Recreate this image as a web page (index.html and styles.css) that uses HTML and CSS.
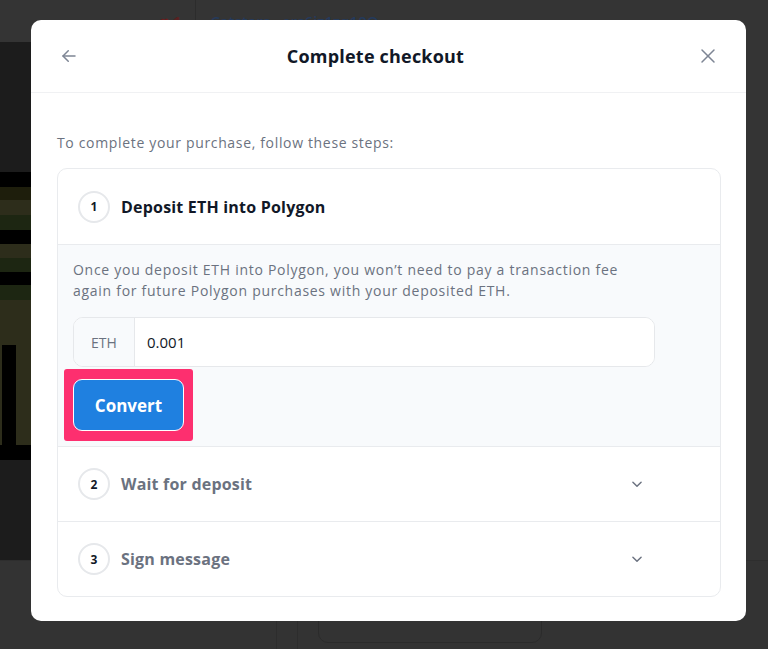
FILE: index.html
```html
<!DOCTYPE html>
<html lang="en">
<head>
    <meta charset="UTF-8">
    <meta name="viewport" content="width=device-width, initial-scale=1.0">
    <title>Complete checkout</title>
    <link rel="stylesheet" href="styles.css">
</head>
<body>
    <div class="page">
        <header class="topbar">
            <span class="likes"><span class="heart">&#9829;</span> 1</span>
            <span class="sep"></span>
            <a class="owner" href="#">Catstars · ers6iz1zq10Q</a>
        </header>
        <main class="stage">
            <div class="art">
                <div class="band b-dark" style="height: 130px"></div>
                <div class="band b-black" style="height: 15px"></div>
                <div class="band b-moss" style="height: 13px"></div>
                <div class="band b-olive" style="height: 15px"></div>
                <div class="band b-green" style="height: 15px"></div>
                <div class="band b-black" style="height: 14px"></div>
                <div class="band b-olive" style="height: 14px"></div>
                <div class="band b-green" style="height: 14px"></div>
                <div class="band b-black" style="height: 13px"></div>
                <div class="band b-green" style="height: 15px"></div>
                <div class="band b-olive b-tall" style="height: 145px"><span class="pillar"></span></div>
                <div class="band b-black" style="height: 15px"></div>
                <div class="band b-dark" style="height: 100px"></div>
            </div>
            <div class="side"></div>
        </main>
        <footer class="below">
            <span class="rule"></span>
            <span class="rule"></span>
            <div class="ghost-card"></div>
        </footer>
    </div>

    <div class="modal">
        <div class="modal-head">
            <button class="icon-btn" aria-label="Back">
                <svg width="18" height="18" viewBox="0 0 24 24" fill="none" stroke="currentColor" stroke-width="2" stroke-linecap="round" stroke-linejoin="round"><path d="M20 12H4"/><path d="M11 5l-7 7 7 7"/></svg>
            </button>
            <h2>Complete checkout</h2>
            <button class="icon-btn" aria-label="Close">
                <svg width="18" height="18" viewBox="0 0 24 24" fill="none" stroke="currentColor" stroke-width="2" stroke-linecap="round"><path d="M4 4l16 16"/><path d="M20 4L4 20"/></svg>
            </button>
        </div>

        <div class="modal-body">
            <p class="intro">To complete your purchase, follow these steps:</p>

            <div class="steps">
                <div class="step active">
                    <div class="step-head">
                        <span class="num">1</span>
                        <span class="step-title">Deposit ETH into Polygon</span>
                    </div>
                    <div class="step-body">
                        <p>Once you deposit ETH into Polygon, you won’t need to pay a transaction fee again for future Polygon purchases with your deposited ETH.</p>
                        <div class="amount">
                            <span class="unit">ETH</span>
                            <input type="text" value="0.001">
                        </div>
                        <div class="highlight">
                            <button class="convert">Convert</button>
                        </div>
                    </div>
                </div>

                <div class="step">
                    <div class="step-head">
                        <span class="num">2</span>
                        <span class="step-title">Wait for deposit</span>
                        <svg class="chev" width="14" height="14" viewBox="0 0 24 24" fill="none" stroke="currentColor" stroke-width="2.5" stroke-linecap="round" stroke-linejoin="round"><path d="M5 9l7 7 7-7"/></svg>
                    </div>
                </div>

                <div class="step">
                    <div class="step-head">
                        <span class="num">3</span>
                        <span class="step-title">Sign message</span>
                        <svg class="chev" width="14" height="14" viewBox="0 0 24 24" fill="none" stroke="currentColor" stroke-width="2.5" stroke-linecap="round" stroke-linejoin="round"><path d="M5 9l7 7 7-7"/></svg>
                    </div>
                </div>
            </div>
        </div>
    </div>
</body>
</html>
```

FILE: styles.css
```css
body {
    margin: 0;
    background-color: #333333;
    font-family: "Open Sans", Arial, sans-serif;
    overflow: hidden;
}

/* page behind the dialog */
.page {
    width: 768px;
    height: 649px;
}

.topbar {
    height: 42px;
    display: flex;
    align-items: center;
    padding-left: 160px;
    gap: 14px;
    background-color: #343434;
    font-size: 15px;
}

.likes {
    color: #5a2020;
    font-weight: 700;
}

.heart {
    color: #6b1c1c;
}

.sep {
    width: 1px;
    height: 42px;
    background-color: #2c2c2c;
}

.owner {
    color: #243a5c;
    text-decoration: none;
    font-weight: 600;
}

.stage {
    height: 518px;
    display: flex;
}

.art {
    width: 300px;
    display: flex;
    flex-direction: column;
}

.band {
    flex-shrink: 0;
}

.b-dark  { background-color: #1c1c1c; }
.b-black { background-color: #000000; }
.b-moss  { background-color: #1e1e0c; }
.b-olive { background-color: #2d2d1b; }
.b-green { background-color: #1d2612; }

.b-tall {
    display: flex;
    align-items: flex-end;
    padding-left: 2px;
}

.pillar {
    width: 14px;
    height: 100px;
    background-color: #000000;
}

.side {
    flex: 1;
    background-color: #343434;
}

.below {
    height: 89px;
    display: flex;
    padding-left: 276px;
    border-top: 1px solid #2e2e2e;
}

.rule {
    width: 1px;
    background-color: #2d2d2d;
    margin-right: 20px;
}

.ghost-card {
    width: 222px;
    height: 50px;
    margin: 30px 0 0 0;
    border: 1px solid #2b2b2b;
    border-radius: 10px;
}

/* dialog */
.modal {
    position: absolute;
    left: 31px;
    top: 20px;
    width: 715px;
    height: 601px;
    background-color: #ffffff;
    border-radius: 10px;
    box-sizing: border-box;
}

.modal-head {
    height: 72px;
    display: flex;
    align-items: center;
    padding: 0 29px;
    border-bottom: 1px solid #f0f1f3;
}

.modal-head h2 {
    flex: 1;
    margin: 0;
    padding-right: 26px;
    text-align: center;
    font-size: 18px;
    font-weight: 700;
    color: #111827;
    letter-spacing: 0.2px;
}

.icon-btn {
    width: 18px;
    height: 18px;
    padding: 0;
    border: none;
    background: none;
    color: #7d8594;
    display: flex;
}

.modal-body {
    padding: 40px 25px 25px 26px;
}

.intro {
    margin: 0 0 15px;
    font-size: 14px;
    line-height: 20px;
    color: #6b7280;
    letter-spacing: 0.66px;
}

.steps {
    border: 1px solid #e9ebee;
    border-radius: 10px;
    overflow: hidden;
}

.step + .step {
    border-top: 1px solid #e9ebee;
}

.step-head {
    height: 74px;
    display: flex;
    align-items: center;
    padding: 0 76px 0 20px;
    gap: 11px;
}

.active .step-head {
    height: 75px;
    border-bottom: 1px solid #e9ebee;
}

.num {
    width: 28px;
    height: 28px;
    border: 2px solid #e6e8eb;
    border-radius: 50%;
    display: flex;
    align-items: center;
    justify-content: center;
    font-size: 12px;
    font-weight: 700;
    color: #111827;
}

.step-title {
    font-size: 16px;
    font-weight: 700;
    color: #6b7280;
    letter-spacing: 0.2px;
}

.active .step-title {
    color: #111827;
}

.chev {
    margin-left: auto;
    color: #6b7280;
}

.step-body {
    background-color: #f8fafc;
    padding: 14px 16px 5px 15px;
}

.step-body p {
    max-width: 582px;
    margin: 0 0 16px;
    font-size: 14px;
    line-height: 21px;
    color: #6b7280;
    letter-spacing: 0.72px;
}

.amount {
    width: 582px;
    height: 50px;
    box-sizing: border-box;
    display: flex;
    border: 1px solid #e6e8eb;
    border-radius: 10px;
    background-color: #ffffff;
    overflow: hidden;
}

.unit {
    width: 60px;
    display: flex;
    align-items: center;
    justify-content: center;
    background-color: #f8fafc;
    border-right: 1px solid #e6e8eb;
    font-size: 14px;
    color: #6b7280;
}

.amount input {
    flex: 1;
    border: none;
    outline: none;
    padding: 0 12px;
    font-family: inherit;
    font-size: 15px;
    color: #111827;
}

/* pink frame drawn over the button in the capture */
.highlight {
    display: inline-block;
    margin: 2px 0 0 -9px;
    padding: 10px 9px;
    background-color: #fd2f6f;
    border-radius: 3px;
}

.convert {
    display: block;
    width: 111px;
    height: 52px;
    border: 1px solid #ffffff;
    border-radius: 9px;
    background-color: #1f80e0;
    color: #ffffff;
    font-family: inherit;
    font-size: 17px;
    font-weight: 700;
}
```
